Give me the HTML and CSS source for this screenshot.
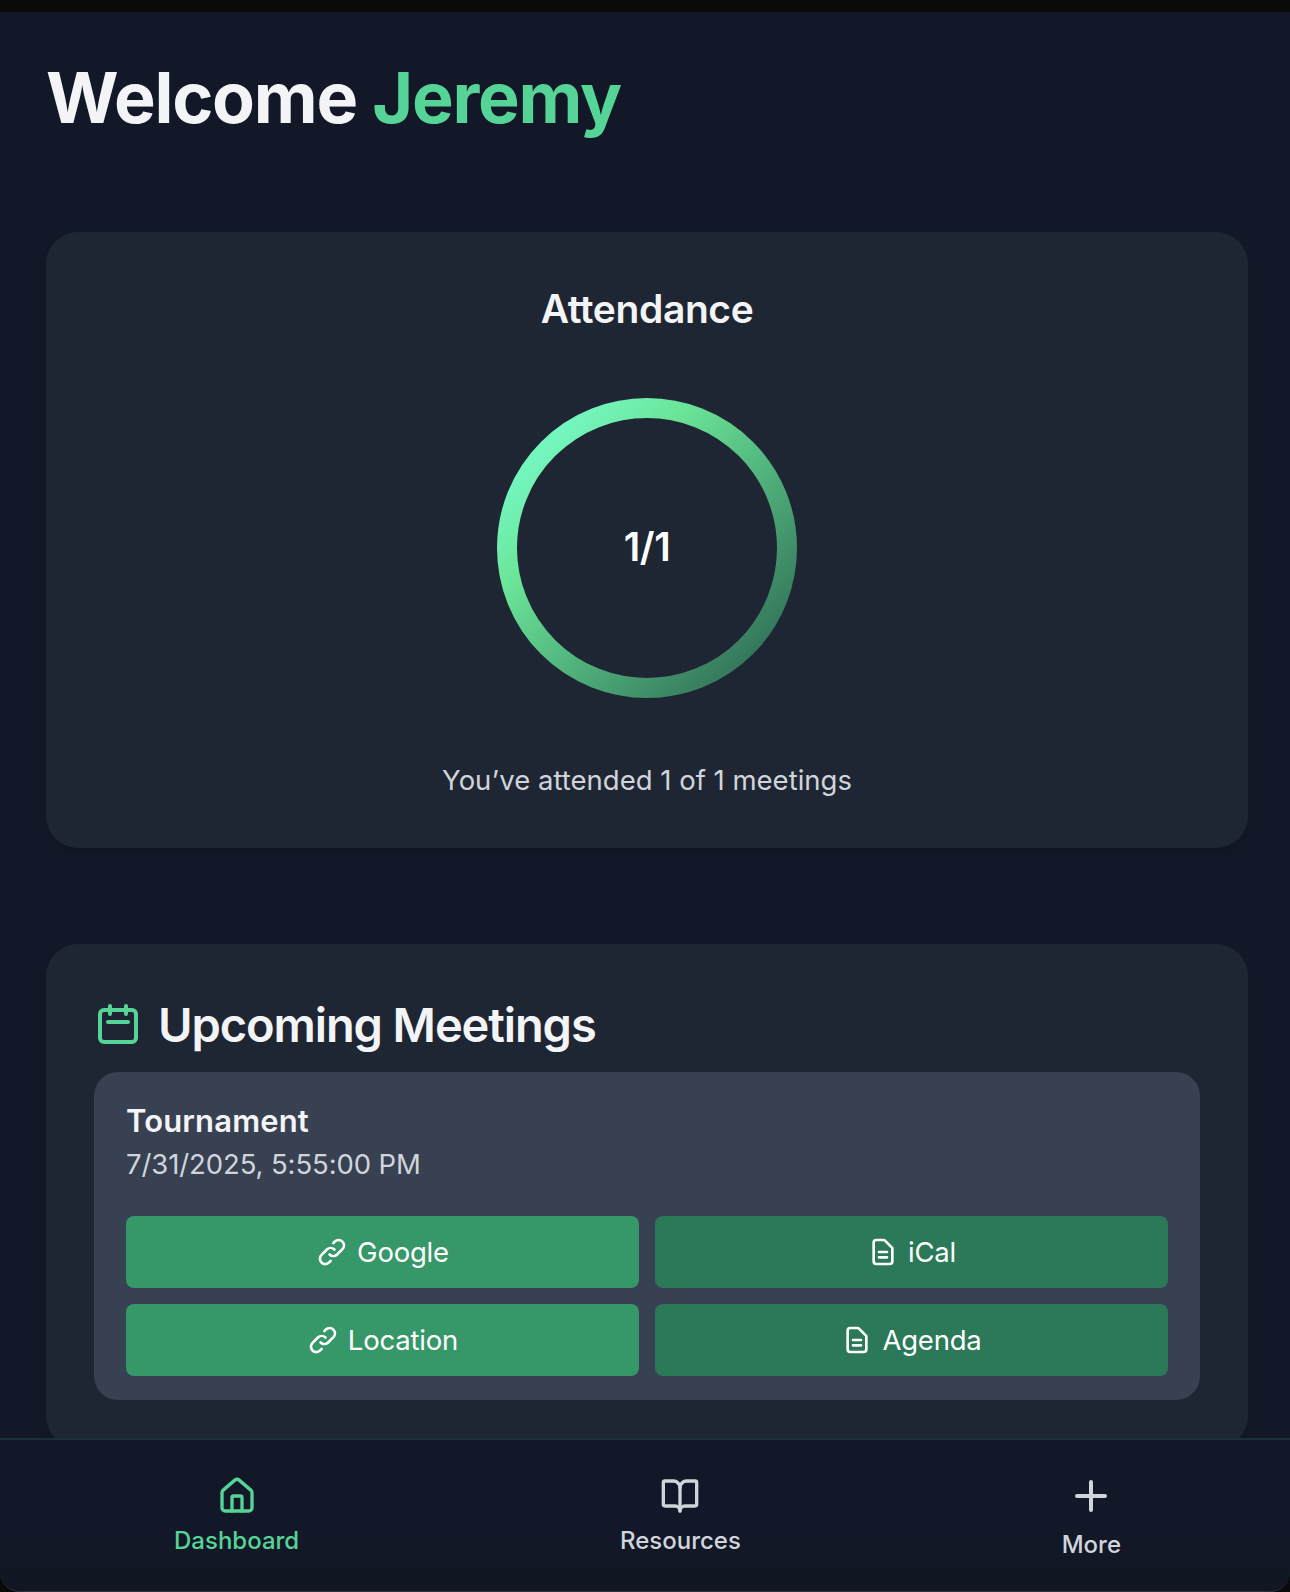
FILE: index.html
```html
<!DOCTYPE html>
<html lang="en">
<head>
<meta charset="utf-8">
<title>Dashboard</title>
<link rel="stylesheet" href="styles.css">
</head>
<body>
<div class="app">
  <main class="content">
    <h1 class="welcome">Welcome <span class="accent">Jeremy</span></h1>

    <section class="card attendance">
      <h2 class="attendance-title">Attendance</h2>
      <div class="ring">
        <svg class="ring-svg" viewBox="0 0 300 300">
          <defs>
            <linearGradient id="ring-gradient" x1="0" y1="0" x2="1" y2="1">
              <stop offset="0.13" stop-color="#74f6c0"/>
              <stop offset="0.31" stop-color="#6be699"/>
              <stop offset="0.9" stop-color="#327459"/>
            </linearGradient>
          </defs>
          <circle cx="150" cy="150" r="140" fill="none" stroke="url(#ring-gradient)" stroke-width="20"/>
        </svg>
        <span class="ring-label">1/1</span>
      </div>
      <p class="attendance-note">You’ve attended 1 of 1 meetings</p>
    </section>

    <section class="card meetings">
      <h2 class="meetings-title">
        <svg class="icon icon-calendar" viewBox="0 0 24 24"><path d="M8 3v4M16 3v4M7 11h10M5 21h14a2 2 0 0 0 2-2V7a2 2 0 0 0-2-2H5a2 2 0 0 0-2 2v12a2 2 0 0 0 2 2z"/></svg>
        <span class="meetings-text">Upcoming Meetings</span>
      </h2>
      <article class="meeting">
        <h3 class="meeting-name">Tournament</h3>
        <p class="meeting-date">7/31/2025, 5:55:00 PM</p>
        <div class="actions">
          <a class="button"><svg class="icon icon-small" viewBox="0 0 24 24"><path d="M13.828 10.172a4 4 0 0 0-5.656 0l-4 4a4 4 0 1 0 5.656 5.656l1.102-1.101m-.758-4.899a4 4 0 0 0 5.656 0l4-4a4 4 0 0 0-5.656-5.656l-1.1 1.1"/></svg><span>Google</span></a>
          <a class="button button-dark"><svg class="icon icon-small" viewBox="0 0 24 24"><path d="M9 12h6m-6 4h6m2 5H7a2 2 0 0 1-2-2V5a2 2 0 0 1 2-2h5.586a1 1 0 0 1 .707.293l5.414 5.414a1 1 0 0 1 .293.707V19a2 2 0 0 1-2 2z"/></svg><span>iCal</span></a>
          <a class="button"><svg class="icon icon-small" viewBox="0 0 24 24"><path d="M13.828 10.172a4 4 0 0 0-5.656 0l-4 4a4 4 0 1 0 5.656 5.656l1.102-1.101m-.758-4.899a4 4 0 0 0 5.656 0l4-4a4 4 0 0 0-5.656-5.656l-1.1 1.1"/></svg><span>Location</span></a>
          <a class="button button-dark"><svg class="icon icon-small" viewBox="0 0 24 24"><path d="M9 12h6m-6 4h6m2 5H7a2 2 0 0 1-2-2V5a2 2 0 0 1 2-2h5.586a1 1 0 0 1 .707.293l5.414 5.414a1 1 0 0 1 .293.707V19a2 2 0 0 1-2 2z"/></svg><span>Agenda</span></a>
        </div>
      </article>
    </section>
  </main>

  <nav class="tabs">
    <a class="tab tab-dashboard"><svg class="icon icon-tab" viewBox="0 0 24 24"><path d="M15 21v-8a1 1 0 0 0-1-1h-4a1 1 0 0 0-1 1v8"/><path d="M3 10a2 2 0 0 1 .709-1.528l7-5.999a2 2 0 0 1 2.582 0l7 5.999A2 2 0 0 1 21 10v9a2 2 0 0 1-2 2H5a2 2 0 0 1-2-2z"/></svg><span>Dashboard</span></a>
    <a class="tab tab-resources"><svg class="icon icon-tab" viewBox="0 0 24 24"><path d="M12 7v14"/><path d="M3 18a1 1 0 0 1-1-1V4a1 1 0 0 1 1-1h5a4 4 0 0 1 4 4 4 4 0 0 1 4-4h5a1 1 0 0 1 1 1v13a1 1 0 0 1-1 1h-6a3 3 0 0 0-3 3 3 3 0 0 0-3-3z"/></svg><span>Resources</span></a>
    <a class="tab tab-more"><svg class="icon icon-more" viewBox="0 0 24 24"><path d="M12 5v14M5 12h14"/></svg><span>More</span></a>
  </nav>
</div>
</body>
</html>
```
FILE: styles.css
```css
* { box-sizing: border-box; }
body {
  margin: 0;
  height: 1592px;
  padding-top: 12px;
  overflow: hidden;
  background: #0a0a0a;
  color: #f3f4f6;
  font-family: Inter, "Liberation Sans", sans-serif;
}
h1, h2, h3, p { margin: 0; }
.app {
  display: flex;
  flex-direction: column;
  height: 1580px;
  overflow: hidden;
  background: #121827;
  border-bottom: 1px solid #2b3140;
  border-radius: 0 0 20px 20px;
}
.content {
  flex: 1;
  min-height: 0;
  overflow: hidden;
  padding: 36px 42px 0 46px;
}
.welcome {
  height: 100px;
  line-height: 100px;
  margin-bottom: 84px;
  font-size: 70px;
  font-weight: 700;
  letter-spacing: -1.22px;
  white-space: nowrap;
}
.accent { color: #56d397; }
.card {
  border-radius: 32px;
  background: #1f2633;
  box-shadow: 0 6px 10px -2px rgba(0, 0, 0, 0.14);
}
.attendance {
  display: flex;
  flex-direction: column;
  align-items: center;
  height: 616px;
  margin-bottom: 96px;
  padding-top: 49px;
}
.attendance-title {
  height: 56px;
  line-height: 56px;
  font-size: 39px;
  font-weight: 600;
  letter-spacing: -0.4px;
}
.ring {
  display: grid;
  place-items: center;
  width: 300px;
  height: 300px;
  margin-top: 61px;
}
.ring-svg, .ring-label { grid-area: 1 / 1; }
.ring-svg { width: 300px; height: 300px; }
.ring-label {
  padding-bottom: 4px;
  color: #fff;
  font-size: 39px;
  font-weight: 600;
  letter-spacing: -0.4px;
}
.attendance-note {
  height: 40px;
  line-height: 40px;
  margin-top: 62px;
  color: #d1d5db;
  font-size: 27.5px;
}
.meetings {
  height: 504px;
  padding: 48px 48px 0;
}
.meetings-title {
  display: flex;
  align-items: center;
  gap: 16px;
  height: 64px;
  margin-bottom: 16px;
  font-size: 47px;
  font-weight: 600;
  letter-spacing: -1.1px;
}
.icon {
  flex: none;
  fill: none;
  stroke: currentColor;
  stroke-width: 2;
  stroke-linecap: round;
  stroke-linejoin: round;
}
.icon-calendar { width: 48px; height: 48px; color: #56d397; }
.meeting {
  height: 328px;
  padding: 28px 32px 0;
  border-radius: 24px;
  background: #384152;
}
.meeting-name {
  height: 42px;
  line-height: 42px;
  font-size: 31px;
  font-weight: 600;
  letter-spacing: 0.15px;
}
.meeting-date {
  height: 40px;
  line-height: 40px;
  margin: 2px 0 32px;
  color: #d1d5db;
  font-size: 27.5px;
  letter-spacing: -0.1px;
}
.actions {
  display: grid;
  grid-template-columns: 1fr 1fr;
  gap: 16px;
}
.button {
  display: flex;
  align-items: center;
  justify-content: center;
  gap: 9px;
  height: 72px;
  border-radius: 8px;
  background: #369769;
  color: #fff;
  font-size: 27.5px;
  letter-spacing: -0.2px;
}
.button-dark { background: #2b7958; }
.icon-small { width: 32px; height: 32px; }
.tabs {
  display: flex;
  flex: none;
  justify-content: space-between;
  height: 153px;
  padding: 32px 169px 0 174px;
  border-top: 2px solid #1b3037;
  background: linear-gradient(#121827 65%, #111622);
}
.tab {
  display: flex;
  flex-direction: column;
  align-items: center;
  color: #d1d5db;
  font-size: 24px;
  line-height: 32px;
  font-weight: 500;
}
.tab-dashboard { color: #56d397; }
.icon-tab { width: 40px; height: 40px; margin: 4px 0 9px; }
.icon-more { width: 48px; height: 48px; margin-bottom: 9px; }
```
